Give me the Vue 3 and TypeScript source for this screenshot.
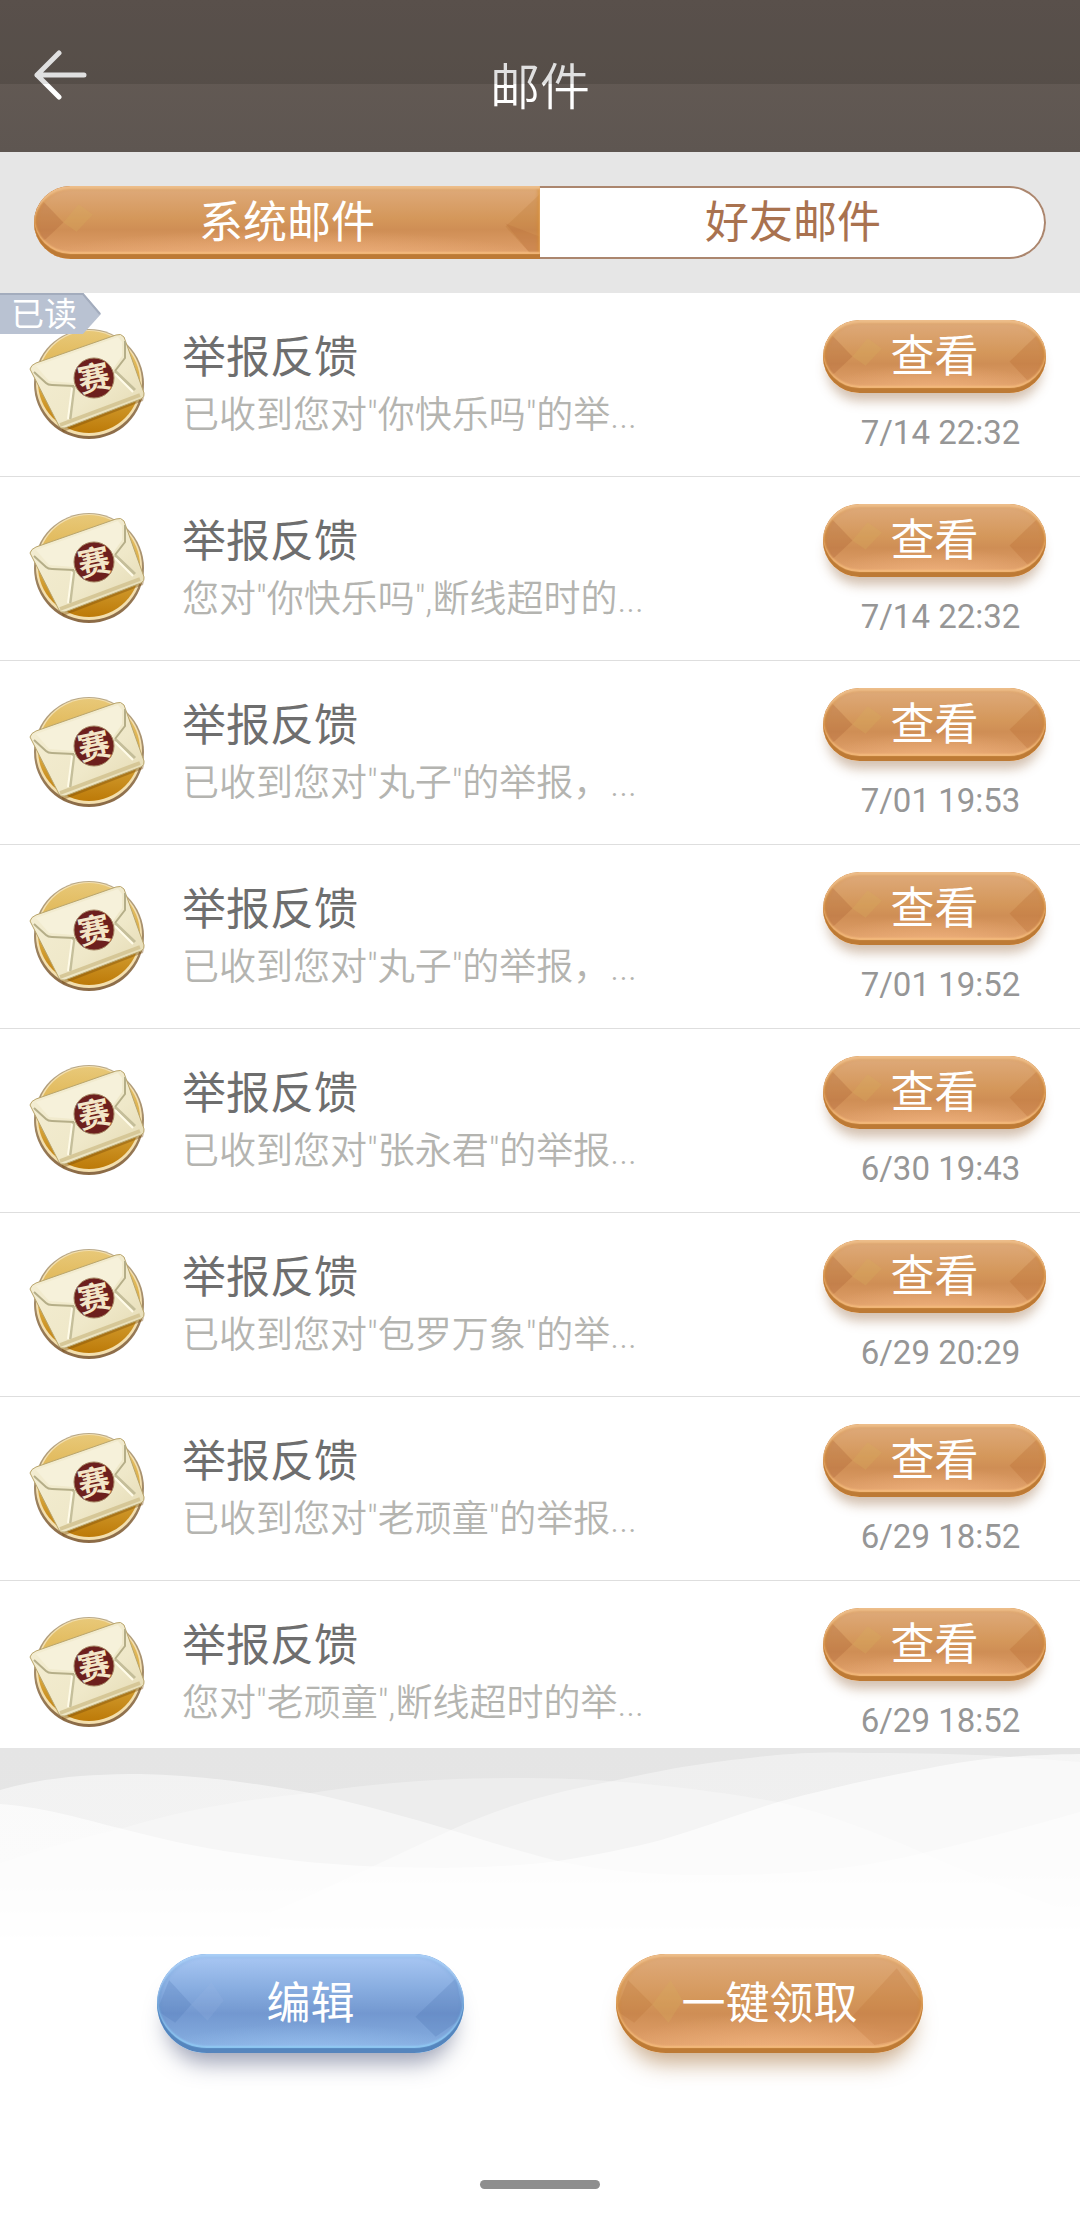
<script setup lang="ts">
import { ref } from 'vue'

interface Mail {
  id: number
  title: string
  summary: string
  date: string
  read: boolean
}

const tabs = ['系统邮件', '好友邮件']
const activeTab = ref(0)

const title = '举报反馈'
const mails = ref<Mail[]>([
  { id: 1, title, summary: '已收到您对"你快乐吗"的举...', date: '7/14 22:32', read: true },
  { id: 2, title, summary: '您对"你快乐吗",断线超时的...', date: '7/14 22:32', read: false },
  { id: 3, title, summary: '已收到您对"丸子"的举报，...', date: '7/01 19:53', read: false },
  { id: 4, title, summary: '已收到您对"丸子"的举报，...', date: '7/01 19:52', read: false },
  { id: 5, title, summary: '已收到您对"张永君"的举报...', date: '6/30 19:43', read: false },
  { id: 6, title, summary: '已收到您对"包罗万象"的举...', date: '6/29 20:29', read: false },
  { id: 7, title, summary: '已收到您对"老顽童"的举报...', date: '6/29 18:52', read: false },
  { id: 8, title, summary: '您对"老顽童",断线超时的举...', date: '6/29 18:52', read: false },
])
</script>

<template>
  <div class="page">
    <svg class="defs" aria-hidden="true">
      <defs>
        <linearGradient id="coin" x1="0" y1="0" x2="0" y2="1">
          <stop offset="0" stop-color="#e8c878" />
          <stop offset="0.5" stop-color="#dcae45" />
          <stop offset="1" stop-color="#bd7a08" />
        </linearGradient>
        <linearGradient id="rim" x1="0" y1="0" x2="0" y2="1">
          <stop offset="0" stop-color="#b9a988" />
          <stop offset="1" stop-color="#8b6a45" />
        </linearGradient>
        <linearGradient id="paper" x1="0" y1="0" x2="1" y2="1">
          <stop offset="0" stop-color="#f4eed4" />
          <stop offset="0.6" stop-color="#efe8c9" />
          <stop offset="1" stop-color="#e2d7ae" />
        </linearGradient>
      </defs>
    </svg>

    <header class="header">
      <button class="back" type="button" aria-label="返回">
        <svg width="56" height="52" viewBox="0 0 56 52" fill="none" stroke="#fff" stroke-width="5" stroke-linecap="round" stroke-linejoin="round">
          <path d="M26 3 L4 25 L26 47 M4 25 H51" />
        </svg>
      </button>
      <h1>邮件</h1>
      <span class="status-shade"></span>
    </header>

    <nav class="tab-strip">
      <div class="tabs">
        <button
          v-for="(tab, i) in tabs"
          :key="tab"
          type="button"
          class="tab"
          :class="{ gem: activeTab === i, 'tab-active': activeTab === i }"
          @click="activeTab = i"
        >
          <svg v-if="activeTab === i" class="facet facet-left" viewBox="0 0 72 72" aria-hidden="true">
            <path d="M8 14 L29 36 L12 52 L0 60 V20 Z" fill="#a85f32" fill-opacity="0.28" />
            <path d="M29 36 L44 18 L58 28 L42 45 Z" fill="#d8ac5c" fill-opacity="0.3" />
          </svg>
          <svg v-if="activeTab === i" class="facet facet-right" viewBox="0 0 72 72" aria-hidden="true">
            <path d="M72 8 L38 40 L62 66 H72 Z" fill="#b8702f" fill-opacity="0.22" />
            <path d="M38 37 L72 50 V66 H62 Z" fill="#b06030" fill-opacity="0.18" />
          </svg>
          <span class="label">{{ tab }}</span>
        </button>
      </div>
    </nav>

    <ul class="list">
      <li v-for="mail in mails" :key="mail.id" class="row">
        <svg class="mail-icon" width="120" height="112" viewBox="0 0 120 112" aria-hidden="true">
          <circle cx="61" cy="55" r="55" fill="url(#rim)" />
          <circle cx="61" cy="54" r="53" fill="#f3dfae" />
          <circle cx="61" cy="53" r="51" fill="url(#coin)" />
          <path d="M5 39 L35 99 L116 68 L115 72 L35 103 Z" fill="#7a4c08" fill-opacity="0.4" />
          <path d="M2 40 Q3 36 8 34 L88 6 Q93 4 96 8 L116 64 Q117 68 113 70 L37 99 Q33 100 31 97 L4 44 Z" fill="url(#paper)" stroke="#b9a56c" stroke-width="1" />
          <path d="M6 43 L18 54 Q20 56 24 56 L46 57 M87 42 L97 29 L97 12" fill="none" stroke="#b5ae88" stroke-width="2" />
          <path d="M46 57 L42 90 M87 42 L107 61" fill="none" stroke="#bab48f" stroke-width="3" stroke-opacity="0.8" />
          <path d="M44 59 L40 90 M87 45 L105 63" fill="none" stroke="#fffbe8" stroke-width="2" />
          <path d="M8 37 L90 8 L94 13 L94 27 L85 40 Q66 54 46 54 L21 52 Z" fill="#f6f1da" />
          <path d="M32 96 L112 66" fill="none" stroke="#d6c797" stroke-width="4" />
          <circle cx="66" cy="49" r="20" fill="#6d1f1d" stroke="#a48562" stroke-width="1" />
          <text x="66" y="61" text-anchor="middle" transform="rotate(-12 66 49)" class="seal">赛</text>
        </svg>

        <div class="text">
          <h2>{{ mail.title }}</h2>
          <p>{{ mail.summary }}</p>
        </div>

        <div class="side">
          <button type="button" class="gem view">
            <svg class="facet facet-left" viewBox="0 0 72 72" aria-hidden="true">
              <path d="M8 14 L29 36 L12 52 L0 60 V20 Z" fill="#a85f32" fill-opacity="0.28" />
              <path d="M29 36 L44 18 L58 28 L42 45 Z" fill="#d8ac5c" fill-opacity="0.3" />
            </svg>
            <svg class="facet facet-right" viewBox="0 0 72 72" aria-hidden="true">
              <path d="M63 15 L36 41 L54 60 L72 50 V24 Z" fill="#b8672f" fill-opacity="0.28" />
            </svg>
            <span class="label">查看</span>
          </button>
          <time>{{ mail.date }}</time>
        </div>

        <span v-if="mail.read" class="read">
          <svg width="102" height="41" viewBox="0 0 102 41" aria-hidden="true">
            <path d="M0 0 H83 L101 21 L83 41 H0 Z" fill="#b9c2d2" />
            <path d="M0 1 H83 L100 21" fill="none" stroke="#a3acbd" stroke-width="2" />
          </svg>
          <span class="read-text">已读</span>
        </span>
      </li>
    </ul>

    <footer class="footer">
      <svg class="waves" viewBox="0 0 1080 200" preserveAspectRatio="none" aria-hidden="true">
        <defs>
          <linearGradient id="haze" x1="0" y1="0" x2="0" y2="1">
            <stop offset="0" stop-color="#e5e5e5" />
            <stop offset="0.6" stop-color="#e6e6e6" />
            <stop offset="0.8" stop-color="#f0f0f0" />
            <stop offset="1" stop-color="#fff" />
          </linearGradient>
        </defs>
        <rect width="1080" height="200" fill="url(#haze)" />
        <path d="M0 115 C60 95 90 88 127 79 C190 60 250 51 310 45 C390 33 450 30 517 30 C600 29 700 40 778 54 C830 66 880 86 923 105 C980 130 1030 148 1080 169 V200 H0 Z" fill="#fff" fill-opacity="0.3" />
        <path d="M270 165 C340 135 400 105 451 82 C510 55 560 43 613 33 C670 20 710 14 758 9 C800 4 835 4 868 5 C920 5 960 6 999 8 L1080 14 V200 H270 Z" fill="#fff" fill-opacity="0.4" />
        <path d="M0 42 C45 29 90 26 141 26 C200 27 260 36 310 45 C365 57 410 70 451 82 C500 97 530 106 558 113 C610 124 660 128 723 127 C800 127 860 120 923 105 C980 92 1030 78 1080 64 V200 H0 Z" fill="#fff" fill-opacity="0.5" />
        <path d="M0 56 C50 60 85 72 127 82 C180 96 225 104 275 110 C340 119 420 121 482 119 C510 118 535 116 558 113 C600 106 630 100 661 92 C700 80 740 66 778 54 C830 40 880 29 930 20 C970 12 1010 7 1080 6 V200 H0 Z" fill="#fff" fill-opacity="0.62" />
      </svg>
      <div class="actions">
        <button type="button" class="gem gem-blue action">
          <svg class="facet facet-left" viewBox="0 0 98 98" aria-hidden="true">
            <path d="M12 26 L34 50 L18 68 L0 56 Z" fill="#4a72b0" fill-opacity="0.22" />
            <path d="M34 50 L54 28 L66 46 L50 66 Z" fill="#a0bce8" fill-opacity="0.16" />
          </svg>
          <svg class="facet facet-right" viewBox="0 0 98 98" aria-hidden="true">
            <path d="M90 24 L50 62 L70 82 L98 62 Z" fill="#3f68aa" fill-opacity="0.2" />
          </svg>
          <span class="label">编辑</span>
        </button>
        <button type="button" class="gem action">
          <svg class="facet facet-left" viewBox="0 0 98 98" aria-hidden="true">
            <path d="M12 26 L36 50 L18 68 L0 56 Z" fill="#b3692f" fill-opacity="0.2" />
            <path d="M36 50 L54 26 L66 46 L52 68 Z" fill="#d8ac5c" fill-opacity="0.28" />
          </svg>
          <svg class="facet facet-right" viewBox="0 0 98 98" aria-hidden="true">
            <path d="M72 14 L24 66 L50 90 L88 82 L98 50 Z" fill="#b8672f" fill-opacity="0.2" />
          </svg>
          <span class="label">一键领取</span>
        </button>
      </div>
      <span class="home-bar"></span>
    </footer>
  </div>
</template>

<style>
body {
  margin: 0;
  background: #fff;
}
</style>

<style scoped>
.page {
  display: flex;
  flex-direction: column;
  height: 100vh;
  background: #fff;
  font-family: Roboto, 'Noto Sans CJK SC', sans-serif;
}

.defs {
  position: absolute;
  width: 0;
  height: 0;
}

h1,
h2,
p,
ul {
  margin: 0;
  padding: 0;
  font-weight: 400;
}

button {
  padding: 0;
  border: 0;
  background: none;
  font-family: inherit;
}

.header {
  position: relative;
  flex: none;
  display: grid;
  grid-template-columns: 128px 1fr 128px;
  align-items: center;
  height: 152px;
  box-sizing: border-box;
  padding-top: 24px;
  background: linear-gradient(#665c56, #5e5651);
}

.status-shade {
  position: absolute;
  inset: 0 0 auto;
  height: 84px;
  background: rgba(0, 0, 0, 0.12);
}

.back {
  display: flex;
  align-self: start;
  padding: 26px 0 20px 33px;
}

h1 {
  color: #fff;
  font-size: 50px;
  font-weight: 350;
  line-height: 64px;
  text-align: center;
}

.tab-strip {
  flex: none;
  padding: 34px 34px;
  background: #e6e6e6;
}

.tabs {
  display: flex;
  height: 73px;
  border-radius: 37px;
  background: #fff;
  box-shadow: inset 0 0 0 2px #ab866e;
}

.tab {
  flex: 1;
  color: #a9724f;
  font-size: 44px;
  line-height: 64px;
}

.gem {
  position: relative;
  overflow: hidden;
  color: #fff;
  font-size: 44px;
  line-height: 64px;
  background:
    radial-gradient(ellipse 50% 40% at 50% 100%, rgba(250, 190, 140, 0.55), transparent),
    linear-gradient(#dfab7c, #d4975a 45%, #cf8e55 60%, #e0a06a 92%);
}

.gem::after {
  content: '';
  position: absolute;
  inset: 0;
  border-radius: inherit;
  box-shadow:
    inset 0 -5px 1px #bd7a35,
    inset 0 -7px 2px #f6bd7e,
    inset 0 3px 2px #edbd8a,
    inset 0 0 4px 1px #d58a2c;
}

.tab-active {
  color: #fff;
}

.tab-active:first-child {
  border-radius: 37px 0 0 37px;
}

.tab-active:last-child {
  border-radius: 0 37px 37px 0;
}

.facet {
  position: absolute;
  top: 0;
  height: 100%;
}

.facet-left {
  left: 0;
}

.facet-right {
  right: 0;
}

.label {
  position: relative;
}

.list {
  flex: 1;
  min-height: 0;
  overflow-y: auto;
  scrollbar-width: none;
  list-style: none;
}

.row {
  position: relative;
  display: flex;
  height: 184px;
  box-sizing: border-box;
  padding: 27px 34px 0 28px;
  border-bottom: 1px solid #dedede;
}

.mail-icon {
  flex: none;
  margin-top: 9px;
}

.seal {
  fill: #f3e6c8;
  font-family: 'Noto Sans CJK SC', sans-serif;
  font-size: 32px;
  font-weight: 700;
}

.text {
  flex: 1;
  min-width: 0;
  padding: 7px 0 0 34px;
}

h2 {
  color: #6e6e6e;
  font-size: 44px;
  line-height: 62px;
}

p {
  overflow: hidden;
  color: #b4b4b0;
  font-size: 37px;
  font-weight: 350;
  line-height: 54px;
  white-space: nowrap;
}

.side {
  flex: none;
  display: flex;
  flex-direction: column;
  width: 223px;
}

.view {
  height: 73px;
  border-radius: 37px;
  box-shadow: 0 12px 12px -4px rgba(130, 75, 25, 0.35);
}

time {
  margin-top: 20px;
  padding-left: 12px;
  color: #969696;
  font-size: 33px;
  line-height: 40px;
  text-align: center;
}

.read {
  position: absolute;
  top: 0;
  left: 0;
  display: grid;
}

.read > * {
  grid-area: 1 / 1;
}

.read-text {
  padding-left: 11px;
  color: #fff;
  font-size: 33px;
  line-height: 43px;
}

.footer {
  position: relative;
  flex: none;
  display: flex;
  flex-direction: column;
  align-items: center;
}

.waves {
  position: absolute;
  inset: 0 0 auto;
  width: 100%;
  height: 200px;
}

.actions {
  position: relative;
  display: flex;
  justify-content: center;
  gap: 152px;
  padding-top: 206px;
}

.action {
  width: 307px;
  height: 99px;
  border-radius: 50px;
  box-shadow: 0 20px 22px -10px rgba(150, 90, 25, 0.5);
}

.gem-blue {
  background:
    radial-gradient(ellipse 50% 30% at 50% 100%, rgba(160, 200, 245, 0.6), transparent),
    linear-gradient(#aac8f4, #88ade0 35%, #7398d0 60%, #85ade0 92%);
  box-shadow: 0 20px 22px -10px rgba(60, 70, 110, 0.5);
}

.gem-blue::after {
  box-shadow:
    inset 0 -5px 1px #5585bd,
    inset 0 -7px 2px #93cdf6,
    inset 0 3px 2px #a9cef6,
    inset 0 0 4px 1px #5b91cc;
}

.home-bar {
  width: 120px;
  height: 9px;
  margin: 127px 0 43px;
  border-radius: 5px;
  background: #8e8e8e;
}
</style>
